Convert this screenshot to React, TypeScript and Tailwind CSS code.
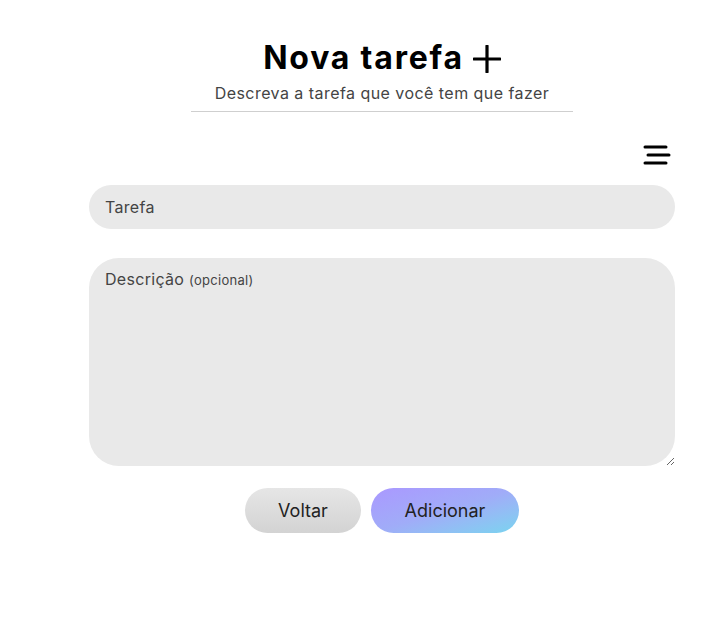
import React from "react";

export default function App() {
  return (
    <div className="min-h-[640px] w-[726px] bg-white" style={{ fontFamily: "Inter, 'Open Sans', sans-serif" }}>
      <div className="ml-[89px] w-[586px] pt-[38px]">
        <div className="flex flex-col items-center">
          <div className="flex items-center gap-[9px]">
            <h1 className="text-[32px] font-bold leading-[40px] tracking-[1.8px] text-black">Nova tarefa</h1>
            <svg width="28" height="28" viewBox="0 0 28 28" className="mt-[2px]">
              <path d="M14 1 V27 M1 14 H27" stroke="#000" strokeWidth="3.2" strokeLinecap="round" />
            </svg>
          </div>
          <p className="mt-[4px] text-[16px] leading-[22px] tracking-[0.45px] text-[#444]">Descreva a tarefa que você tem que fazer</p>
          <div className="mt-[7px] h-px w-[382px] bg-[#cfcfcf]" />
        </div>
        <div className="mt-[32px] flex justify-end pr-[4px]">
          <svg width="28" height="22" viewBox="0 0 28 22">
            <path d="M2 3 H23 M5 11 H26 M2 19 H23" stroke="#000" strokeWidth="3" strokeLinecap="round" />
          </svg>
        </div>
        <div className="mt-[19px] flex h-[44px] items-center rounded-full bg-[#e9e9e9] px-[16px] pb-[1px] text-[16px] tracking-[0.3px] text-[#444]">
          Tarefa
        </div>
        <div className="relative mt-[29px] h-[208px] rounded-[30px] bg-[#e9e9e9] px-[16px] pt-[9px]">
          <span className="text-[16px] tracking-[0.3px] text-[#444]">Descrição </span>
          <span className="text-[13px] tracking-[0.3px] text-[#444]">(opcional)</span>
          <svg width="10" height="10" viewBox="0 0 10 10" className="absolute bottom-0 right-0">
            <path d="M9 2 L2 9 M9 6 L6 9" stroke="#666" strokeWidth="1" />
          </svg>
        </div>
        <div className="mt-[22px] flex justify-center gap-[10px]">
          <button className="h-[45px] w-[116px] rounded-full bg-gradient-to-b from-[#e6e6e6] to-[#d3d3d3] text-[18px] text-[#222]">
            Voltar
          </button>
          <button className="h-[45px] w-[148px] rounded-full bg-gradient-to-br from-[#aa98ff] via-[#a0acf8] to-[#78d4ef] text-[18px] text-[#222]">
            Adicionar
          </button>
        </div>
      </div>
    </div>
  );
}
